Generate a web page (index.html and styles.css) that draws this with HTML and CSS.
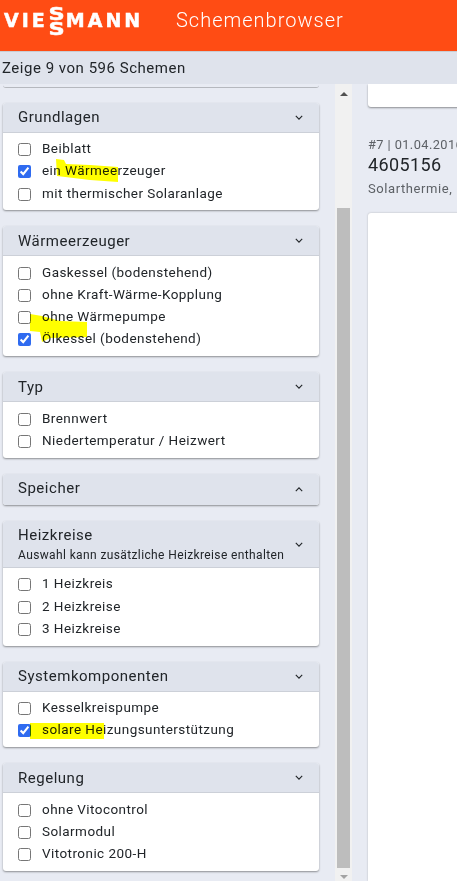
FILE: index.html
```html
<!DOCTYPE html>
<html lang="de">
<head>
<meta charset="utf-8">
<title>Schemenbrowser</title>
<link rel="stylesheet" href="styles.css">
</head>
<body>
<header class="topbar">
  <div class="logo">
    <span class="logo-word">VIE</span>
    <span class="logo-esses"><span>S</span><span>S</span></span>
    <span class="logo-word">MANN</span>
  </div>
  <div class="app-title">Schemenbrowser</div>
</header>
<div class="status">Zeige 9 von 596 Schemen</div>
<div class="content">
  <aside class="filters">
    <div class="card-stub"></div>

    <section class="card">
      <div class="card-head"><span class="card-title">Grundlagen</span><svg class="chev" viewBox="0 0 10 6"><path d="M1 1l4 4 4-4"/></svg></div>
      <div class="card-body">
        <label class="row"><input type="checkbox"><span>Beiblatt</span></label>
        <label class="row"><input type="checkbox" checked><span>ein Wärmeerzeuger</span></label>
        <label class="row"><input type="checkbox"><span>mit thermischer Solaranlage</span></label>
      </div>
    </section>

    <section class="card">
      <div class="card-head"><span class="card-title">Wärmeerzeuger</span><svg class="chev" viewBox="0 0 10 6"><path d="M1 1l4 4 4-4"/></svg></div>
      <div class="card-body">
        <label class="row"><input type="checkbox"><span>Gaskessel (bodenstehend)</span></label>
        <label class="row"><input type="checkbox"><span>ohne Kraft-Wärme-Kopplung</span></label>
        <label class="row"><input type="checkbox"><span>ohne Wärmepumpe</span></label>
        <label class="row"><input type="checkbox" checked><span>Ölkessel (bodenstehend)</span></label>
      </div>
    </section>

    <section class="card">
      <div class="card-head"><span class="card-title">Typ</span><svg class="chev" viewBox="0 0 10 6"><path d="M1 1l4 4 4-4"/></svg></div>
      <div class="card-body">
        <label class="row"><input type="checkbox"><span>Brennwert</span></label>
        <label class="row"><input type="checkbox"><span>Niedertemperatur / Heizwert</span></label>
      </div>
    </section>

    <section class="card">
      <div class="card-head closed"><span class="card-title">Speicher</span><svg class="chev" viewBox="0 0 10 6"><path d="M1 5l4-4 4 4"/></svg></div>
    </section>

    <section class="card">
      <div class="card-head tall">
        <div><div class="card-title">Heizkreise</div><div class="card-sub">Auswahl kann zusätzliche Heizkreise enthalten</div></div>
        <svg class="chev" viewBox="0 0 10 6"><path d="M1 1l4 4 4-4"/></svg>
      </div>
      <div class="card-body">
        <label class="row"><input type="checkbox"><span>1 Heizkreis</span></label>
        <label class="row"><input type="checkbox"><span>2 Heizkreise</span></label>
        <label class="row"><input type="checkbox"><span>3 Heizkreise</span></label>
      </div>
    </section>

    <section class="card">
      <div class="card-head"><span class="card-title">Systemkomponenten</span><svg class="chev" viewBox="0 0 10 6"><path d="M1 1l4 4 4-4"/></svg></div>
      <div class="card-body">
        <label class="row"><input type="checkbox"><span>Kesselkreispumpe</span></label>
        <label class="row"><input type="checkbox" checked><span>solare Heizungsunterstützung</span></label>
      </div>
    </section>

    <section class="card">
      <div class="card-head"><span class="card-title">Regelung</span><svg class="chev" viewBox="0 0 10 6"><path d="M1 1l4 4 4-4"/></svg></div>
      <div class="card-body">
        <label class="row"><input type="checkbox"><span>ohne Vitocontrol</span></label>
        <label class="row"><input type="checkbox"><span>Solarmodul</span></label>
        <label class="row"><input type="checkbox"><span>Vitotronic 200-H</span></label>
      </div>
    </section>
  </aside>

  <div class="scrollbar">
    <span class="arrow up"></span>
    <div class="thumb-track"><div class="thumb"></div></div>
    <span class="arrow down"></span>
  </div>

  <main class="results">
    <div class="result-stub"></div>
    <div class="meta">#7 | 01.04.2016</div>
    <div class="number">4605156</div>
    <div class="desc">Solarthermie,</div>
    <div class="result-card"></div>
  </main>
</div>

<svg class="marker" viewBox="0 0 457 881" aria-hidden="true">
  <polygon points="56,159 64,160 66,164 90,165 118,167 118,182 90,180 57,176"/>
  <polygon points="30,314 42,316 60,321 87,322 87,337 50,338 42,342 40,332 30,331"/>
  <polygon points="30,723 104,723 104,739 30,739"/>
</svg>
</body>
</html>
```
FILE: styles.css
```css
* { box-sizing: border-box; }
html, body { margin: 0; height: 100%; }
body {
  width: 457px;
  height: 881px;
  overflow: hidden;
  display: flex;
  flex-direction: column;
  position: relative;
  background: #e8ebf3;
  font-family: Roboto, "Liberation Sans", sans-serif;
  color: #212529;
}
.topbar {
  height: 52px;
  flex: none;
  background: #ff4c14;
  color: #fff;
  display: flex;
  align-items: center;
  padding: 0 0 11px 4px;
}
.logo {
  display: flex;
  align-items: center;
  width: 172px;
  font-family: "DejaVu Sans", sans-serif;
  font-weight: 700;
  height: 30px;
  -webkit-text-stroke: .5px #fff;
}
.logo-word { font-size: 19px; letter-spacing: 3px; line-height: 1; }
.logo-esses {
  display: flex;
  flex-direction: column;
  font-size: 18px;
  line-height: 15px;
  width: 17px;
  margin: 0 1px 0 0;
  align-items: center;
  transform: scaleX(1.25);
}
.app-title {
  font-size: 20px;
  font-weight: 300;
  letter-spacing: 1px;
  margin-top: -2px;
}
.status {
  height: 32px;
  flex: none;
  background: #dfe3ec;
  font-size: 15px;
  letter-spacing: .52px;
  padding: 7px 0 0 2px;
  box-shadow: 0 -1px 0 #c9ccd2;
  position: relative;
  z-index: 1;
}
.content { flex: 1; display: flex; min-height: 0; }
.filters {
  width: 335px;
  flex: none;
  padding: 0 16px 0 3px;
}
.card-stub {
  height: 3.5px;
  background: #e8ebf3;
  border-bottom: 1px solid #b5b8be;
  border-radius: 0 0 3px 3px;
  margin-bottom: 15.2px;
}
.card {
  background: #fff;
  border-radius: 3px;
  box-shadow: 0 1px 2px rgba(0,0,0,.4);
  margin-bottom: 16px;
  overflow: hidden;
}
.card-head {
  height: 30px;
  background: #dfe3ec;
  border-bottom: 1px solid #ccd0d8;
  display: flex;
  justify-content: space-between;
  align-items: center;
  padding: 0 16px 0 15px;
}
.card-head.closed { border-bottom: 0; height: 31.5px; }
.card-head.closed .card-title { margin-top: -4px; }
.card-head.tall { height: 46.5px; }
.card-head.tall .card-title { margin-top: -1px; }
.card-title { font-size: 15px; letter-spacing: .52px; line-height: 18px; }
.card-sub { font-size: 12px; letter-spacing: .38px; line-height: 14px; margin-top: 4px; }
.chev { width: 8px; height: 5px; fill: none; stroke: #212529; stroke-width: 1.4; flex: none; }
.card-body { padding: 5.4px 0 5.8px 15px; }
.row {
  display: flex;
  align-items: center;
  height: 22.2px;
  font-size: 13.5px;
  letter-spacing: .44px;
}
.row span { padding-bottom: 2px; }
.row input {
  width: 13px;
  height: 13px;
  margin: 1px 11px 0 0;
  accent-color: #2f6bf0;
  flex: none;
}
.scrollbar {
  width: 17px;
  flex: none;
  background: #f1f1f1;
  display: flex;
  flex-direction: column;
  align-items: center;
  padding: 8px 0 2px;
}
.arrow {
  width: 0;
  height: 0;
  border-left: 4px solid transparent;
  border-right: 4px solid transparent;
  flex: none;
}
.arrow.up { border-bottom: 4px solid #505050; }
.arrow.down { border-top: 4px solid #a3a3a3; }
.thumb-track { flex: 1; width: 13px; padding: 112px 0 7px; }
.thumb { height: 100%; background: #bdbdbd; }
.results { flex: 1; min-width: 0; overflow: hidden; padding-left: 16px; display: flex; flex-direction: column; }
.result-stub {
  height: 23px;
  flex: none;
  width: 120px;
  background: #fff;
  border-radius: 0 0 0 3px;
  box-shadow: 0 1px 2px rgba(0,0,0,.4);
  margin-bottom: 30px;
}
.meta, .desc { font-size: 12.8px; letter-spacing: .42px; color: #5d6166; line-height: 16px; white-space: nowrap; }
.number { font-size: 18px; letter-spacing: .4px; line-height: 22px; color: #212529; margin-top: 1px; }
.desc { font-size: 13px; margin-top: 5px; letter-spacing: .58px; }
.result-card {
  flex: 1;
  margin-top: 16px;
  margin-right: -20px;
  background: #fff;
  border-radius: 3px 0 0 0;
  box-shadow: 0 0 2px rgba(0,0,0,.25);
}
.marker {
  position: absolute;
  left: 0;
  top: 0;
  width: 457px;
  height: 881px;
  pointer-events: none;
  mix-blend-mode: multiply;
}
.marker polygon { fill: #ffff00; }
```
